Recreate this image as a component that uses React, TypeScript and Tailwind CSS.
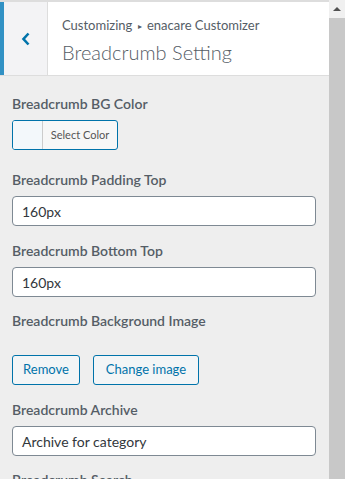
import React from "react";

const font = { fontFamily: 'Lato, "Noto Sans", sans-serif' };

function Label({ children }: { children: React.ReactNode }) {
  return (
    <div className="shrink-0 text-[14px] font-semibold leading-[20px] text-[#555d66]">{children}</div>
  );
}

function Input({ value }: { value: string }) {
  return (
    <div className="mt-[6px] flex h-[30px] w-[304px] shrink-0 items-center rounded-[4px] border border-[#7e8993] bg-white px-[9px] text-[14px] text-[#32373c]">
      {value}
    </div>
  );
}

export default function App() {
  return (
    <div style={font} className="relative h-[479px] w-[345px] overflow-hidden bg-[#eeeeee]">
      <div className="flex h-full">
        <div className="flex w-[329px] shrink-0 flex-col">
          <div className="h-[2px] shrink-0 bg-[#dddddd]" />
          <div className="flex h-[74px] shrink-0 border-b border-[#dddddd] bg-white">
            <div className="w-[4px] bg-[#3191c4]" />
            <div className="flex w-[44px] items-center justify-center border-r border-[#dddddd] bg-[#f3f3f5]">
              <svg width="10" height="14" viewBox="0 0 10 14">
                <path d="M7.5 1.5 L2.5 7 L7.5 12.5" fill="none" stroke="#0073aa" strokeWidth="2.6" />
              </svg>
            </div>
            <div className="flex flex-col pl-[14px] pt-[14px]">
              <div className="text-[13px] leading-[18px] text-[#555d66]">
                Customizing <span className="mx-[2px] text-[8px] align-[1px]">▸</span> enacare Customizer
              </div>
              <div className="mt-[4px] text-[20px] font-light leading-[26px] text-[#555d66]">
                Breadcrumb Setting
              </div>
            </div>
          </div>
          <div className="flex flex-col px-[12px] pt-[18px]">
            <Label>Breadcrumb BG Color</Label>
            <div className="mt-[6px] flex h-[30px] w-[106px] shrink-0 overflow-hidden rounded-[3px] border border-[#0073aa] bg-[#f7f7f7]">
              <div className="w-[30px] border-r border-[#cccccc] bg-[#f3f8fb]" />
              <div className="flex flex-1 items-center justify-center text-[11px] text-[#555555]">
                Select Color
              </div>
            </div>
            <div className="mt-[20px] shrink-0">
              <Label>Breadcrumb Padding Top</Label>
            </div>
            <Input value="160px" />
            <div className="mt-[15px] shrink-0">
              <Label>Breadcrumb Bottom Top</Label>
            </div>
            <Input value="160px" />
            <div className="mt-[14px] shrink-0">
              <Label>Breadcrumb Background Image</Label>
            </div>
            <div className="mt-[24px] flex shrink-0 gap-[13px]">
              <div className="flex h-[30px] w-[68px] items-center justify-center rounded-[3px] border border-[#0073aa] bg-[#f3f5f6] text-[13px] text-[#0073aa]">
                Remove
              </div>
              <div className="flex h-[30px] w-[106px] items-center justify-center rounded-[3px] border border-[#0073aa] bg-[#f3f5f6] text-[13px] text-[#0073aa]">
                Change image
              </div>
            </div>
            <div className="mt-[15px] shrink-0">
              <Label>Breadcrumb Archive</Label>
            </div>
            <Input value="Archive for category" />
            <div className="mt-[14px] shrink-0">
              <Label>Breadcrumb Search</Label>
            </div>
          </div>
        </div>
        <div className="flex w-[16px] flex-col">
          <div className="flex h-[18px] shrink-0 items-center justify-center bg-[#f0f0f0]">
            <svg width="8" height="6" viewBox="0 0 8 6">
              <path d="M0 5 L4 1 L8 5 Z" fill="#505050" />
            </svg>
          </div>
          <div className="flex-1 bg-[#c8c8c8]" />
        </div>
      </div>
    </div>
  );
}
